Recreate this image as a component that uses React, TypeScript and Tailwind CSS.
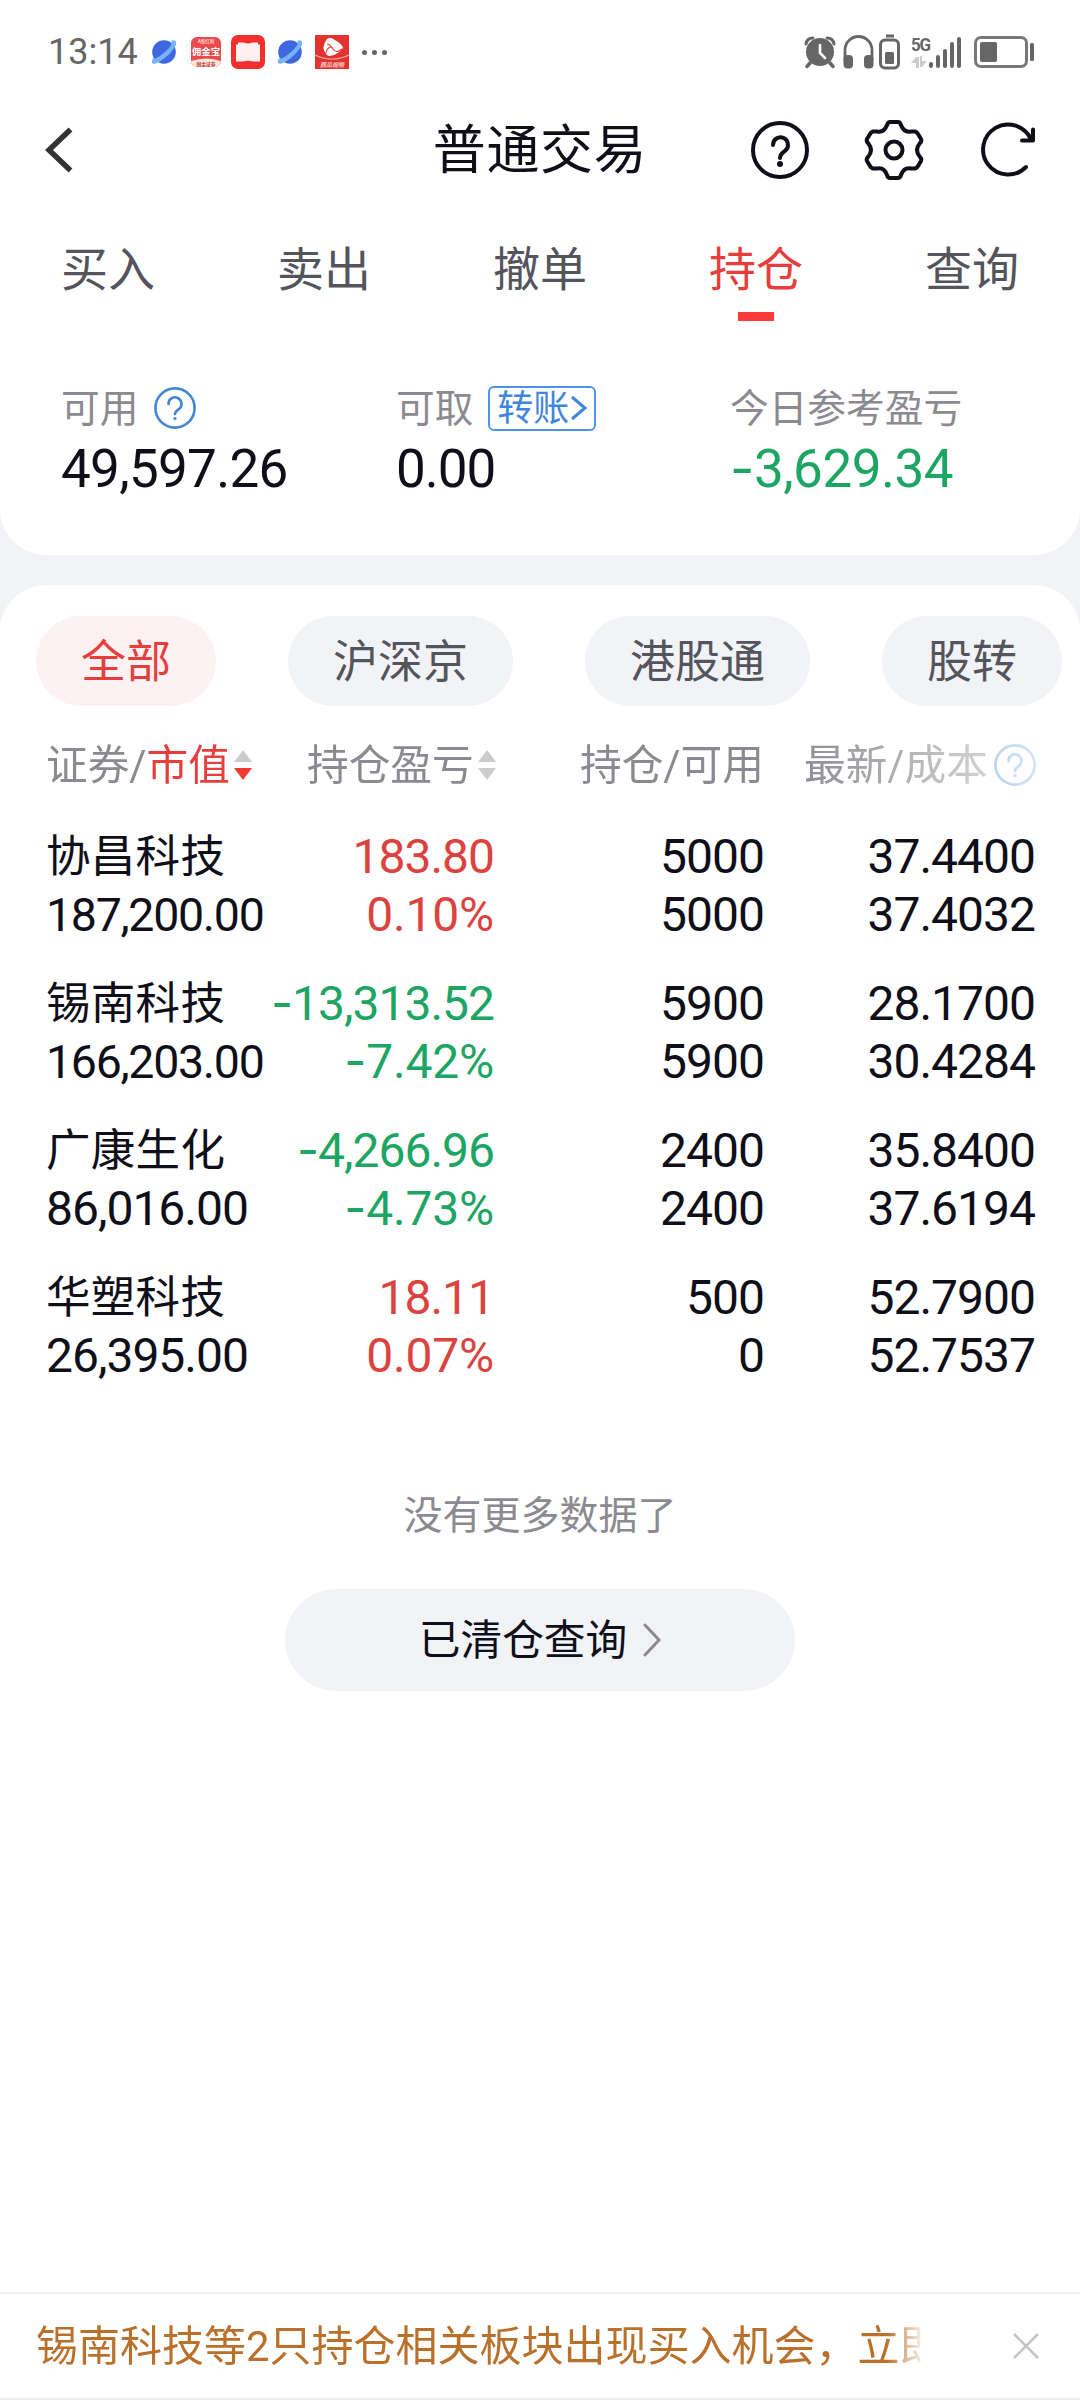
import React from 'react';

type Trend = 'up' | 'down';

interface Position {
  name: string;
  value: string;
  profit: string;
  rate: string;
  trend: Trend;
  holding: string;
  available: string;
  price: string;
  cost: string;
}

const tabs = ['买入', '卖出', '撤单', '持仓', '查询'];
const markets = ['全部', '沪深京', '港股通', '股转'];

const positions: Position[] = [
  { name: '协昌科技', value: '187,200.00', profit: '183.80', rate: '0.10%', trend: 'up', holding: '5000', available: '5000', price: '37.4400', cost: '37.4032' },
  { name: '锡南科技', value: '166,203.00', profit: '-13,313.52', rate: '-7.42%', trend: 'down', holding: '5900', available: '5900', price: '28.1700', cost: '30.4284' },
  { name: '广康生化', value: '86,016.00', profit: '-4,266.96', rate: '-4.73%', trend: 'down', holding: '2400', available: '2400', price: '35.8400', cost: '37.6194' },
  { name: '华塑科技', value: '26,395.00', profit: '18.11', rate: '0.07%', trend: 'up', holding: '500', available: '0', price: '52.7900', cost: '52.7537' },
];

const PlanetIcon = () => (
  <svg className="w-[26px] h-[26px]" viewBox="0 0 26 26">
    <circle cx="13" cy="13" r="11.800" fill="#3f68e0" />
    <path d="M2 19C-1 25 2 26 7 23.500C14 20 21 13 24.500 7C26.500 2 24 0 20 2C22.500 3.500 19 9 13.500 13.500C8 18 3 21 2 19Z" fill="#74b4fa" />
  </svg>
);

const YongjinIcon = () => (
  <svg className="w-[32px] h-[32px]" viewBox="0 0 32 32">
    <rect x="1" y="1" width="30" height="30" rx="6" fill="#ea4a4c" />
    <path d="M1 25Q16 20 31 25a6 6 0 0 1-6 6H7a6 6 0 0 1-6-6Z" fill="#fde6da" />
    <text x="16" y="7" textAnchor="middle" fontSize="4.500" fontWeight="700" fill="#fbd0cc">A股红利</text>
    <text x="16" y="19" textAnchor="middle" fontSize="9.500" fontWeight="700" fill="#fff">佣金宝</text>
    <text x="16" y="29.500" textAnchor="middle" fontSize="4.800" fontWeight="700" fill="#c8403a">国金证券</text>
  </svg>
);

const BookIcon = () => (
  <svg className="w-[34px] h-[34px]" viewBox="0 0 34 34">
    <rect width="34" height="34" rx="7" fill="#f52f30" />
    <path d="M7 7.500H12.500Q17 9.500 21.500 7.500H27V9.500H29V26.500H22Q17 25 12 26.500H5V9.500H7Z" fill="#fff0ee" />
  </svg>
);

const VideoIcon = () => (
  <svg className="w-[34px] h-[34px]" viewBox="0 0 34 34">
    <rect width="34" height="34" fill="#e3332e" />
    <path d="M0 20Q17 28 34 20" fill="none" stroke="#f3a59b" strokeWidth="1.200" />
    <path d="M12 4Q15 2 19 4.500Q27 9 28 12.500Q27 16 20 19.500Q14 22 12 20Q5 13 12 4Z" fill="#fff" />
    <path d="M12 9Q15 9 18 14T27 14M17 12Q12 12 11 18" fill="none" stroke="#e3332e" strokeWidth="1.100" />
    <text x="17" y="32" textAnchor="middle" fontSize="6" fontWeight="700" fontStyle="italic" fill="#fbd3cd">西瓜视频</text>
  </svg>
);

const StatusBar = () => (
  <div className="h-[104px] pl-[48px] pr-[45px] flex items-center justify-between text-[#666]">
    <div className="flex items-center">
      <span className="w-[103px] text-[36px] leading-none">13:14</span>
      <PlanetIcon />
      <div className="ml-[13px] flex items-center gap-[9px]">
        <YongjinIcon />
        <BookIcon />
      </div>
      <div className="ml-[12px] flex items-center gap-[12px]">
        <PlanetIcon />
        <VideoIcon />
      </div>
      <div className="ml-[13px] flex items-center gap-[5px]">
        <i className="w-[5px] h-[5px] rounded-full bg-[#666]" />
        <i className="w-[5px] h-[5px] rounded-full bg-[#666]" />
        <i className="w-[5px] h-[5px] rounded-full bg-[#666]" />
      </div>
    </div>
    <div className="flex items-center">
      {/* Alarm */}
      <svg className="w-[32px] h-[34px]" viewBox="0 0 32 34" fill="none" stroke="#666" strokeLinecap="round">
        <circle cx="16" cy="17" r="14" fill="#666" stroke="none" />
        <path d="M2 9Q3 3 9 3M30 9Q29 3 23 3" strokeWidth="3" />
        <path d="M6 28L3 31.500M26 28l3 3.500" strokeWidth="3.500" />
        <path d="M16 10V18L21 23" stroke="#fff" strokeWidth="2.600" />
      </svg>
      {/* Headphones */}
      <svg className="ml-[7px] w-[31px] h-[34px]" viewBox="0 0 31 34" fill="none">
        <path d="M2 26V15a13.500 13.500 0 0 1 27 0V26" stroke="#666" strokeWidth="2.800" />
        <rect x="0.500" y="20" width="9.500" height="13.500" rx="4" fill="#666" />
        <rect x="21" y="20" width="9.500" height="13.500" rx="4" fill="#666" />
      </svg>
      {/* Accessory battery */}
      <svg className="ml-[5px] w-[21px] h-[36px]" viewBox="0 0 21 36" fill="none">
        <rect x="7" y="0.500" width="8" height="3" fill="#666" />
        <rect x="1.500" y="6" width="18" height="28" rx="4.500" stroke="#666" strokeWidth="3" />
        <rect x="6" y="18" width="9" height="12" rx="1.500" fill="#666" />
      </svg>
      <div className="ml-[11px] w-[18px] flex flex-col">
        <span className="text-[19px] leading-[16px] font-bold tracking-[-1.5px] origin-left scale-x-90">5G</span>
        <svg className="mt-[3px] w-[16px] h-[12px]" viewBox="0 0 16 12" fill="#ccc">
          <path d="M0 7L5 1H8V12H5V7ZM9 0H11V5H16L11 11H9Z" />
        </svg>
      </div>
      <div className="h-[31px] flex items-end gap-[3px]">
        <i className="w-[4px] h-[6px] rounded-full bg-[#666]" />
        <i className="w-[4px] h-[13px] rounded-full bg-[#666]" />
        <i className="w-[4px] h-[19px] rounded-full bg-[#666]" />
        <i className="w-[4px] h-[26px] rounded-full bg-[#666]" />
        <i className="w-[4px] h-[31px] rounded-full bg-[#666]" />
      </div>
      <svg className="ml-[13px] w-[61px] h-[32px]" viewBox="0 0 61 32" fill="none">
        <rect x="1.500" y="1.500" width="51" height="29" rx="5.500" stroke="#777" strokeWidth="3" />
        <rect x="6" y="6" width="17" height="20" rx="2" fill="#666" />
        <rect x="56" y="7" width="4" height="18" rx="1.500" fill="#666" />
      </svg>
    </div>
  </div>
);

const QuestionIcon = ({ className }: { className: string }) => (
  <svg className={className} viewBox="0 0 42 42" fill="none" stroke="#4286d6" strokeLinecap="round">
    <circle cx="21" cy="21" r="19.600" strokeWidth="2.600" />
    <path d="M14.500 17a6.500 6.500 0 1 1 10.600 4.900C22.500 23.700 21 24.500 21 27" strokeWidth="2.600" />
    <circle cx="21" cy="31.500" r="1.600" fill="#4286d6" stroke="none" />
  </svg>
);

const Header = () => (
  <header className="h-[92px] px-[44px] grid grid-cols-[1fr_auto_1fr] items-center">
    <svg className="w-[30px] h-[48px]" viewBox="0 0 30 48" fill="none" stroke="#333" strokeWidth="5.500">
      <path d="M26.500 3.500L5 24L26.500 44.500" />
    </svg>
    <h1 className="pt-[3px] text-[53px] leading-none tracking-[0.6px] text-[#0f0f1a]">普通交易</h1>
    <div className="flex items-center justify-end text-[#0f0f1a]">
      <svg className="w-[60px] h-[60px]" viewBox="0 0 60 60" fill="none" stroke="currentColor" strokeWidth="4" strokeLinecap="round">
        <circle cx="30" cy="30" r="27" />
        <path d="M23 25a7.500 7.500 0 1 1 12 5.800C32 33 30 34.500 30 38" />
        <circle cx="30" cy="44" r="3" fill="currentColor" stroke="none" />
      </svg>
      <svg className="ml-[54px] w-[60px] h-[62px]" viewBox="0 0 60 62" fill="none" stroke="currentColor" strokeWidth="4" strokeLinejoin="round">
        <path d="M26 3H34Q36 3 37 6Q40 14 47 12.500H51Q53 13 54 15L57 20Q58 22 56 24Q50 31 56 38Q58 40 57 42L54 47Q53 49 51 49.500H47Q40 48 37 56Q36 59 34 59H26Q24 59 23 56Q20 48 13 49.500H9Q7 49 6 47L3 42Q2 40 4 38Q10 31 4 24Q2 22 3 20L6 15Q7 13 9 12.500H13Q20 14 23 6Q24 3 26 3Z" />
        <circle cx="30" cy="31" r="8.500" />
      </svg>
      <svg className="ml-[52px] w-[60px] h-[60px]" viewBox="0 0 60 60" fill="none" stroke="currentColor" strokeWidth="4" strokeLinecap="round" strokeLinejoin="round">
        <path d="M50 47A25 25 0 1 1 55 19.500" />
        <path d="M57 9.500V20.500H46" />
      </svg>
    </div>
  </header>
);

const SortIcon = ({ active }: { active?: boolean }) => (
  <svg className="ml-[4px] w-[18px] h-[30px]" viewBox="0 0 18 30">
    <path d="M9 0L18 12H0Z" fill="#ccc" />
    <path d="M0 18H18L9 30Z" fill={active ? '#ec3b30' : '#ccc'} />
  </svg>
);

// The minus sign is set wider than the text font's own hyphen
const Amount = ({ text }: { text: string }) => (
  <>
    {text.startsWith('-') && <span className="font-[Inter] leading-none">-</span>}
    {text.replace('-', '')}
  </>
);

const PositionRow = ({ item }: { item: Position }) => {
  const color = item.trend === 'up' ? 'text-[#dc4340]' : 'text-[#1da564]';
  // Six-digit values shrink a little to stay inside the first column
  const valueSize = item.value.length > 9 ? 'text-[46.500px] tracking-[-1.300px]' : '';
  return (
    <div className="h-[147px] grid grid-cols-[230px_218px_270px_271px] leading-[58px] text-[48px] tracking-[-1px] text-[#0f0f1a] text-right">
      <div className="text-left whitespace-nowrap">
        <p className="text-[44.500px] tracking-[0.3px] h-[58px]">{item.name}</p>
        <p className={valueSize}>{item.value}</p>
      </div>
      <div className={`${color} flex flex-col items-end whitespace-nowrap`}>
        <p className="h-[58px]"><Amount text={item.profit} /></p>
        <p className="h-[58px] tracking-[-0.200px]"><Amount text={item.rate} /></p>
      </div>
      <div>
        <p>{item.holding}</p>
        <p>{item.available}</p>
      </div>
      <div>
        <p>{item.price}</p>
        <p>{item.cost}</p>
      </div>
    </div>
  );
};

export default function App() {
  return (
    <div className="w-[1080px] h-[2400px] bg-[#f2f3f7] flex flex-col overflow-hidden [font-kerning:none] font-[Roboto,'Noto_Sans_CJK_SC',sans-serif]">
      <section className="h-[555px] shrink-0 bg-white rounded-b-[46px]">
        <StatusBar />
        <Header />
        <nav className="h-[146px] grid grid-cols-5">
          {tabs.map(tab => (
            <div key={tab} className={`pt-[44px] flex flex-col items-center text-[47px] ${tab === '持仓' ? 'text-[#e63e3a]' : 'text-[#54555c]'}`}>
              <span className="leading-[60px]">{tab}</span>
              {tab === '持仓' && <i className="mt-[12px] w-[36px] h-[9px] bg-[#f93a37]" />}
            </div>
          ))}
        </nav>

        {/* Account summary */}
        <div className="pt-[36px] pl-[61px] grid grid-cols-[335px_335px_1fr] text-[38.700px] text-[#8a8a90]">
          <div>
            <div className="h-[60px] flex items-center gap-[16px]">
              <span className="pt-[2px]">可用</span>
              <QuestionIcon className="w-[42px] h-[42px]" />
            </div>
            <p className="h-[60px] leading-[63px] text-[53px] tracking-[-0.700px] text-[#0f0f1a]">49,597.26</p>
          </div>
          <div>
            <div className="h-[60px] flex items-center gap-[15px]">
              <span className="pt-[2px]">可取</span>
              <span className="w-[108px] h-[45px] rounded-[6px] border-2 border-[#4c93e6] flex items-center justify-center text-[36px] leading-none text-[#3f86dc]">
                <span className="pt-[2px]">转账</span>
                <svg className="w-[16px] h-[26px] ml-[2px]" viewBox="0 0 16 26" fill="none" stroke="currentColor" strokeWidth="3">
                  <path d="M1 2L14 13L1 24" />
                </svg>
              </span>
            </div>
            <p className="h-[60px] leading-[63px] text-[53px] tracking-[-1px] text-[#0f0f1a]">0.00</p>
          </div>
          <div className="-ml-[1px]">
            <div className="h-[60px] pt-[2px] flex items-center">今日参考盈亏</div>
            <p className="h-[60px] leading-[63px] text-[53px] tracking-[-0.500px] text-[#1da564]"><Amount text="-3,629.34" /></p>
          </div>
        </div>
      </section>

      <section className="mt-[30px] flex-1 bg-white rounded-t-[46px] flex flex-col">
        <div className="pt-[31px] pl-[36px] flex gap-[72px]">
          {markets.map((market, i) => (
            <button key={market} className={`h-[90px] px-[45px] shrink-0 rounded-full text-[45px] leading-[93px] ${i === 0 ? 'bg-[#fef1f3] text-[#e63e3a]' : 'bg-[#f2f3f7] text-[#54555c]'}`}>
              {market}
            </button>
          ))}
        </div>

        <div className="mt-[29px] h-[60px] ml-[46px] w-[1034px] flex items-center text-[41.700px] leading-[60px] text-[#8a8a90] whitespace-nowrap [mask-image:linear-gradient(to_right,black_750px,rgba(0,0,0,0.2)_1000px)]">
          <div className="w-[261px] flex items-center">
            <span className="pt-[2px]">证券/<span className="text-[#e63e3a]">市值</span></span>
            <SortIcon active />
          </div>
          <div className="w-[273px] flex items-center">
            <span className="pt-[2px]">持仓盈亏</span>
            <SortIcon />
          </div>
          <div className="w-[224px] pt-[2px]">持仓/可用</div>
          <div className="w-[182px] pt-[2px] text-right">最新/成本</div>
          <QuestionIcon className="ml-[8px] w-[42px] h-[42px]" />
        </div>

        <div className="pt-[33px] pl-[46px]">
          {positions.map(item => <PositionRow key={item.name} item={item} />)}
        </div>

        <p className="mt-[70px] text-center text-[39px] leading-[60px] text-[#8a8a90]">没有更多数据了</p>
        <button className="mt-[43px] mx-auto w-[510px] h-[102px] rounded-full bg-[#f2f3f7] flex items-center justify-center text-[41.700px] leading-none text-[#0f0f1a]">
          <span className="pt-[2px]">已清仓查询</span>
          <svg className="ml-[16px] w-[18px] h-[34px]" viewBox="0 0 18 34" fill="none" stroke="#8a8a90" strokeWidth="3" strokeLinecap="round">
            <path d="M2 2L16 17L2 32" />
          </svg>
        </button>

        {/* Notice bar */}
        <div className="mt-auto h-[108px] pl-[36px] pr-[41px] border-y-2 border-[#eee] flex items-center justify-between">
          <p className="w-[885px] pt-[2px] overflow-hidden whitespace-nowrap text-[42px] leading-[60px] text-[#b9702b] [mask-image:linear-gradient(to_right,black_850px,transparent_890px)]">
            锡南科技等2只持仓相关板块出现买入机会，立即
          </p>
          <svg className="w-[26px] h-[26px]" viewBox="0 0 26 26" fill="none" stroke="#c4c4c6" strokeWidth="2.500">
            <path d="M1 1L25 25M25 1L1 25" />
          </svg>
        </div>
      </section>
    </div>
  );
}
